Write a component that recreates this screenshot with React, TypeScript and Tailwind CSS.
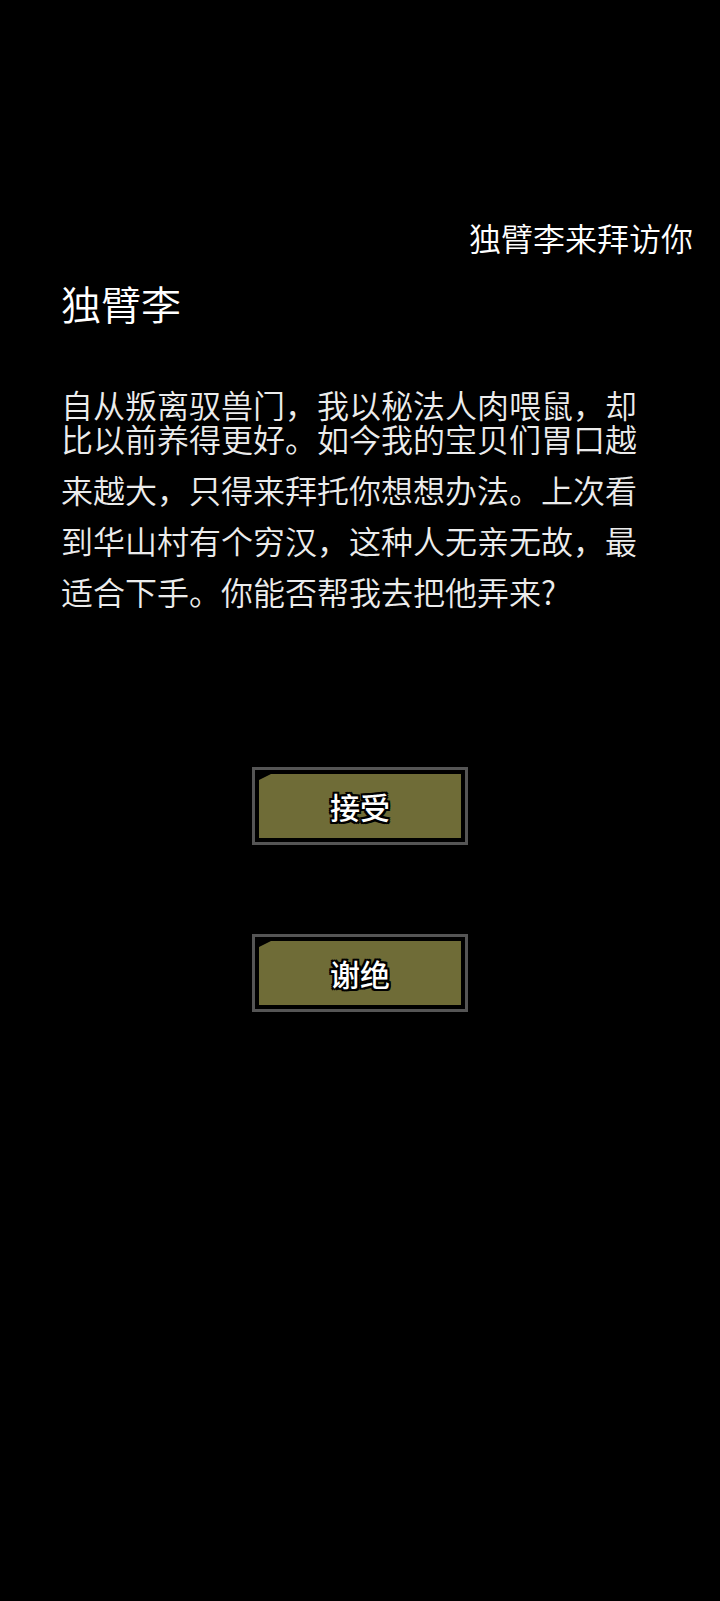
const lines = [
  "自从叛离驭兽门，我以秘法人肉喂鼠，却",
  "比以前养得更好。如今我的宝贝们胃口越",
  "来越大，只得来拜托你想想办法。上次看",
  "到华山村有个穷汉，这种人无亲无故，最",
  "适合下手。你能否帮我去把他弄来?",
];

function GameButton({ label }: { label: string }) {
  return (
    <button className="border-[3px] border-[#555555] bg-black p-[4px]">
      <div className="flex h-[64px] w-[202px] items-center justify-center bg-[#6f6c37] [clip-path:polygon(0_6px,12px_0,100%_0,100%_100%,0_100%)]">
        <span className="text-[30px] font-medium leading-none text-white [text-shadow:-2px_-2px_0_#000,2px_-2px_0_#000,-2px_2px_0_#000,2px_2px_0_#000,0_2px_0_#000,0_-2px_0_#000,2px_0_0_#000,-2px_0_0_#000]">
          {label}
        </span>
      </div>
    </button>
  );
}

export default function App() {
  return (
    <div className="min-h-[1601px] bg-black font-['Noto_Sans_CJK_SC',sans-serif] text-white [font-weight:350]">
      <div className="pt-[217px] pr-[27px] text-right text-[32px] leading-[40px]">
        独臂李来拜访你
      </div>
      <div className="mt-[22px] pl-[61px] text-[40px] leading-[48px]">独臂李</div>
      <div className="mt-[60px] flex flex-col pl-[61px] text-[32px] leading-[34px] text-[#ececec]">
        {lines.map((line, i) => (
          <div key={i} className={i > 1 ? "mt-[17px]" : ""}>
            {line}
          </div>
        ))}
      </div>
      <div className="mt-[159px] flex flex-col items-center gap-[89px]">
        <GameButton label="接受" />
        <GameButton label="谢绝" />
      </div>
    </div>
  );
}
